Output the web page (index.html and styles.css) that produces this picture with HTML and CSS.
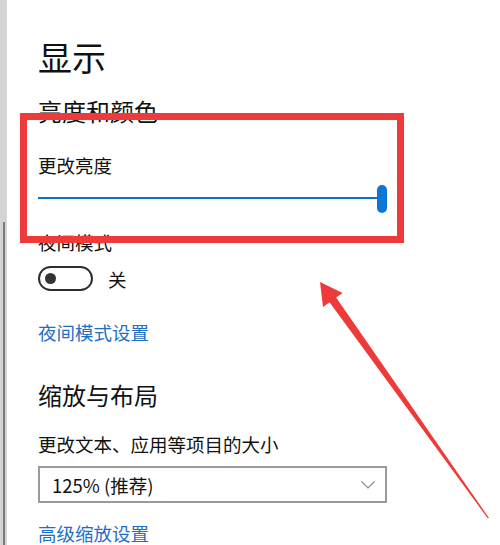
FILE: index.html
```html
<!DOCTYPE html>
<html lang="zh-CN">
<head>
<meta charset="utf-8">
<link rel="stylesheet" href="styles.css">
</head>
<body>
<div class="window">
  <div class="edge"><div class="edge-line"></div></div>
  <main class="content">
    <h1 class="title">显示</h1>
    <h2 class="section first">亮度和颜色</h2>
    <div class="label brightness">更改亮度</div>
    <div class="slider"><div class="track"></div><div class="thumb"></div></div>
    <div class="label night">夜间模式</div>
    <div class="toggle-row">
      <div class="toggle"><div class="knob"></div></div>
      <span class="toggle-text">关</span>
    </div>
    <a class="link night-link">夜间模式设置</a>
    <h2 class="section second">缩放与布局</h2>
    <div class="label scale">更改文本、应用等项目的大小</div>
    <div class="dropdown">
      <span>125% (推荐)</span>
      <svg class="chevron" width="14" height="8" viewBox="0 0 14 8"><path d="M0.5 0.5 L7 7 L13.5 0.5" fill="none" stroke="#8a8a8a" stroke-width="1.2"/></svg>
    </div>
    <a class="link adv-link">高级缩放设置</a>
  </main>
  <div class="highlight"></div>
  <svg class="arrow" width="500" height="545" viewBox="0 0 500 545">
    <polygon points="320,282 342.6,292.9 336.1,297.6 489,518 487.5,518 329.5,302.2 323,306.9" fill="#ef3a3a"/>
  </svg>
</div>
</body>
</html>
```

FILE: styles.css
```css
* { box-sizing: border-box; }
html, body { margin: 0; padding: 0; background: #fff; }
.window {
  position: relative;
  width: 500px;
  height: 545px;
  overflow: hidden;
  display: flex;
  font-family: "Noto Sans CJK SC", "Noto Sans", sans-serif;
  color: #111;
}
.edge {
  width: 7px;
  background: #d4d4d4;
  display: flex;
  flex-direction: column;
  padding-top: 222px;
}
.edge-line {
  flex: 1;
  width: 2px;
  margin-left: 3px;
  background: #7a7a7a;
}
.content {
  flex: 1;
  padding-left: 31px;
  display: flex;
  flex-direction: column;
  align-items: flex-start;
}
.title {
  margin: 37px 0 0;
  font-size: 34px;
  line-height: 40px;
  font-weight: 400;
}
.section {
  margin: 0;
  font-size: 24px;
  line-height: 30px;
  font-weight: 400;
}
.section.first { margin-top: 19px; }
.section.second { margin-top: 36px; }
.label {
  font-size: 18.5px;
  line-height: 24px;
}
.brightness { margin-top: 27px; }
.slider {
  margin-top: 8px;
  width: 349px;
  height: 28px;
  position: relative;
  display: flex;
  align-items: center;
}
.track {
  width: 343px;
  height: 2px;
  background: #0b72c9;
}
.thumb {
  position: absolute;
  left: 339px;
  top: 0;
  width: 10px;
  height: 28px;
  border-radius: 5px;
  background: #0a77d6;
}
.night { margin-top: 19px; }
.toggle-row {
  margin-top: 12px;
  display: flex;
  align-items: center;
  height: 25px;
}
.toggle {
  width: 55px;
  height: 25px;
  border: 2.5px solid #2e2e2e;
  border-radius: 13px;
  display: flex;
  align-items: center;
  padding-left: 5px;
}
.knob {
  width: 11px;
  height: 11px;
  border-radius: 50%;
  background: #333;
}
.toggle-text {
  margin-left: 15px;
  font-size: 18.5px;
  line-height: 24px;
}
.link {
  font-size: 18.5px;
  line-height: 24px;
  color: #1e6fc3;
  text-decoration: none;
}
.night-link { margin-top: 29px; }
.scale { margin-top: 22px; }
.dropdown {
  margin-top: 10px;
  width: 349px;
  height: 39px;
  border: 2px solid #9a9a9a;
  display: flex;
  align-items: center;
  justify-content: space-between;
  padding: 0 10px 0 12px;
  font-size: 18.5px;
  line-height: 24px;
}
.chevron { display: block; }
.adv-link { margin-top: 18px; }
.highlight {
  position: absolute;
  left: 20px;
  top: 113px;
  width: 384px;
  height: 130px;
  border: 7px solid #ee3a3a;
}
.arrow {
  position: absolute;
  left: 0;
  top: 0;
}
```
